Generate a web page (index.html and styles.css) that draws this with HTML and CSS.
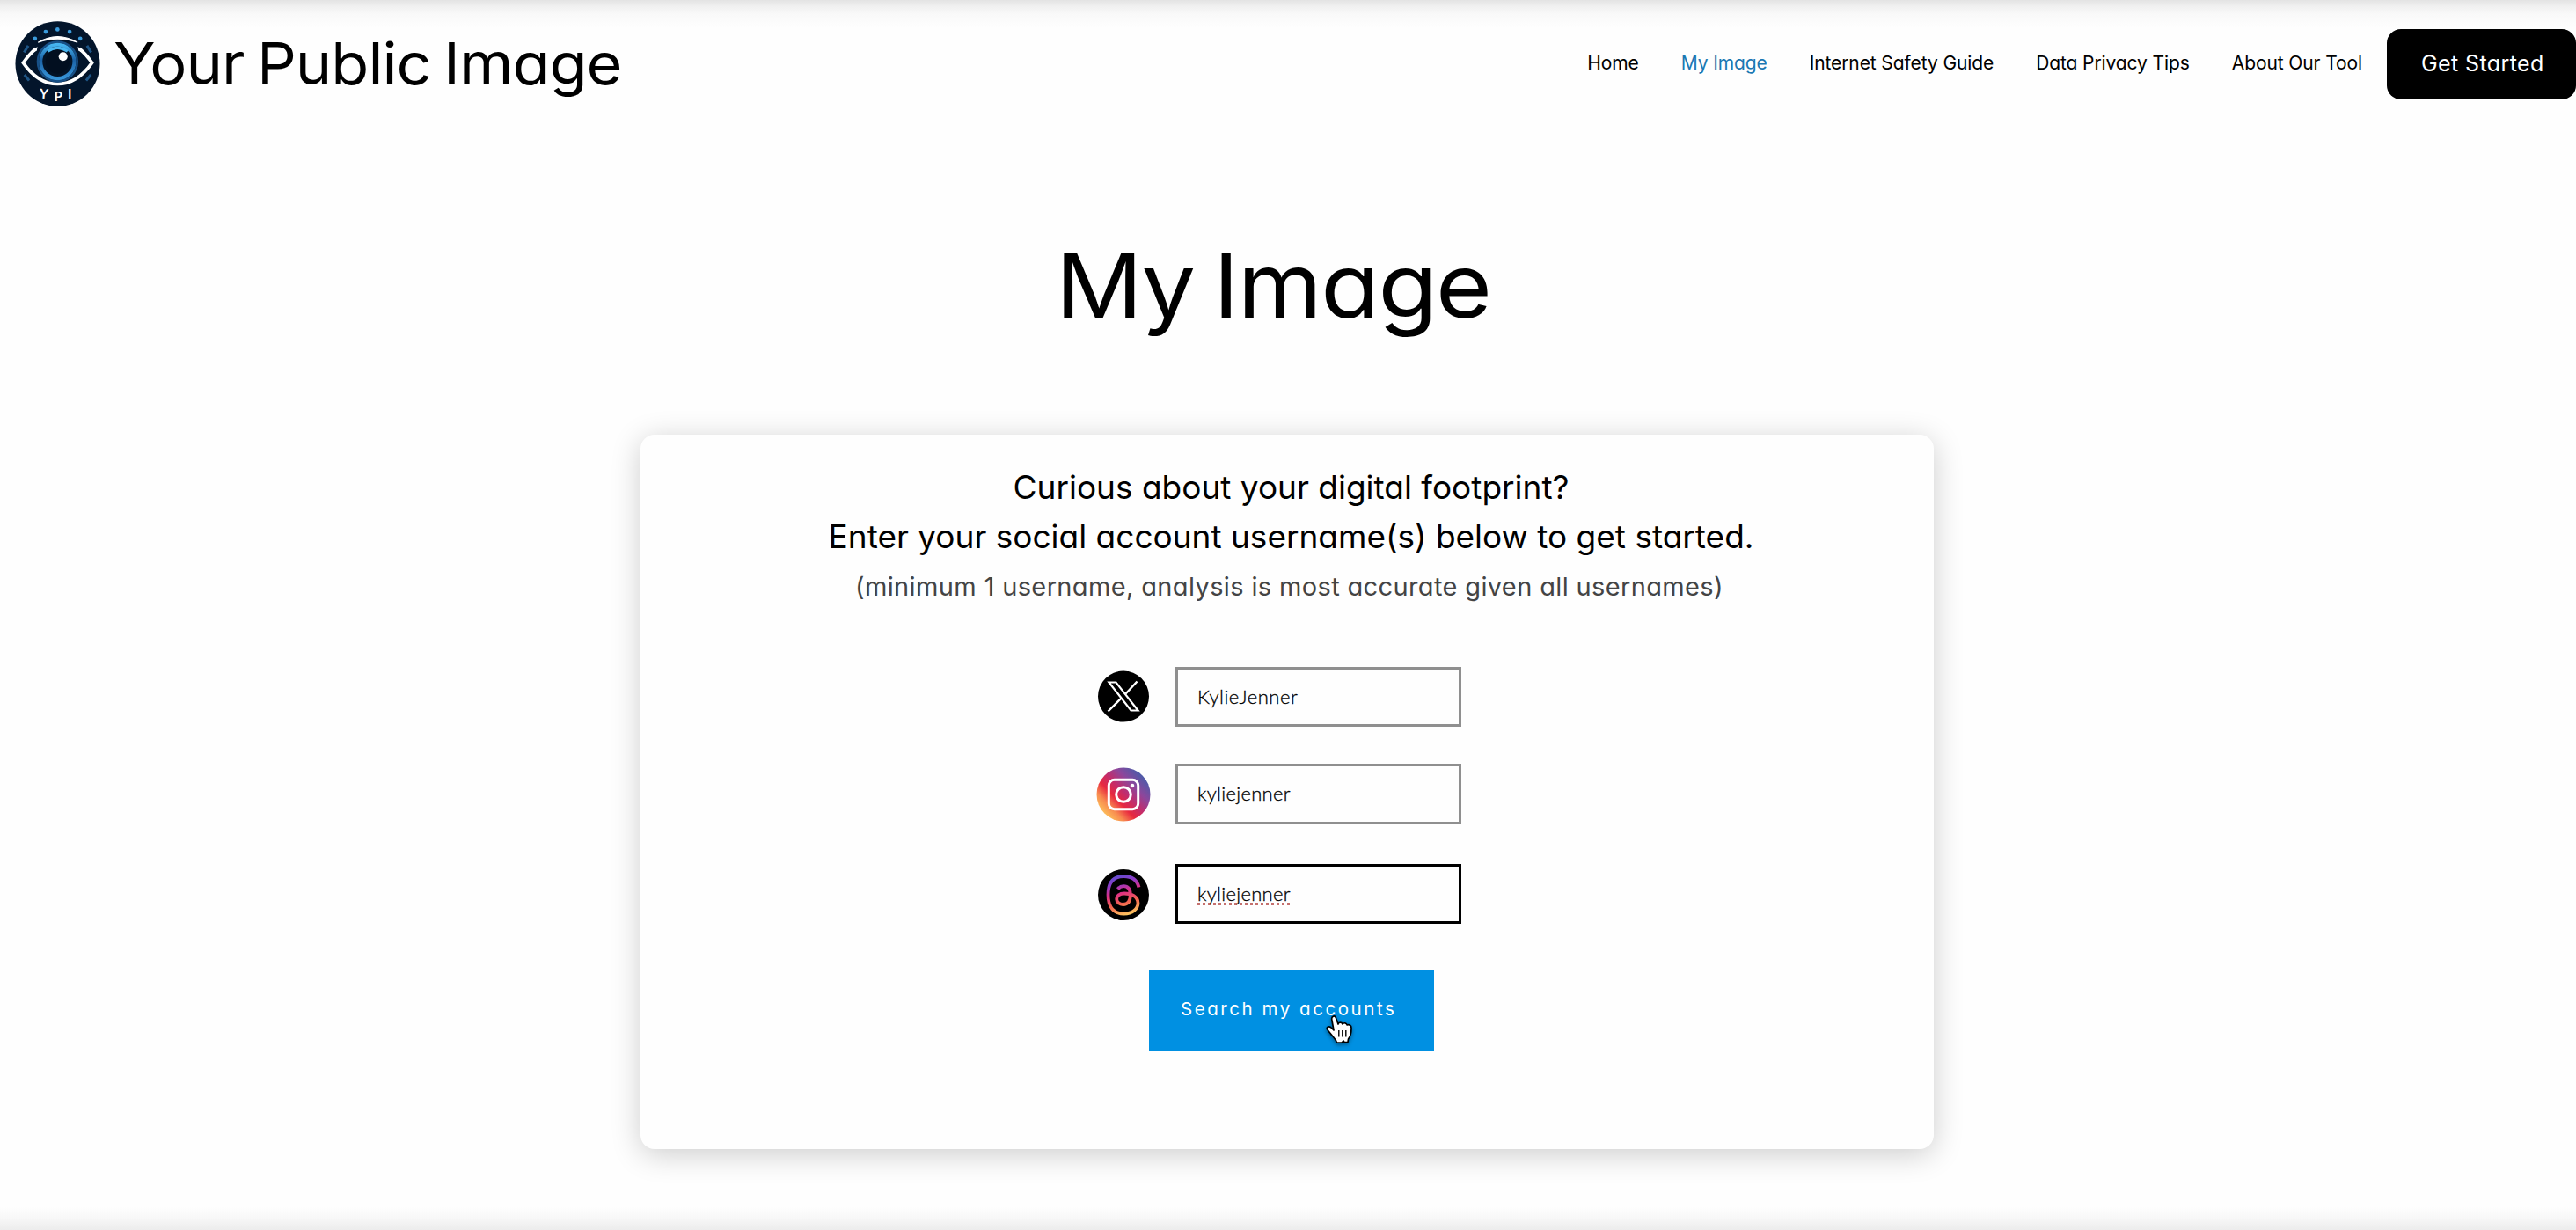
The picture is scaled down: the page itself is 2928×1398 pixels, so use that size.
FILE: index.html
```html
<!DOCTYPE html>
<html lang="en">
<head>
<meta charset="utf-8">
<title>My Image | Your Public Image</title>
<link rel="stylesheet" href="styles.css">
</head>
<body>
<header class="site-header">
  <a class="brand">
    <svg class="brand-logo" viewBox="53 43 287 289">
      <defs>
        <linearGradient id="iris" x1="0" y1="0" x2="0" y2="1"><stop offset="0" stop-color="#45b4f0"/><stop offset=".45" stop-color="#1b62a6"/><stop offset="1" stop-color="#3794d8"/></linearGradient>
      </defs>
      <ellipse cx="196.500" cy="187.500" rx="143" ry="144" fill="#03152b"/>
      <path d="M130 115 Q196 75 264 115 Q196 91 130 115Z" fill="#fff" stroke="#fff" stroke-width="3"/>
      <path d="M123 136 Q100 155 80 184 Q130 256 196 256 Q262 256 313 184 Q293 155 270 136" fill="none" stroke="#fff" stroke-width="11"/>
      <path d="M128 129 L104 154 L126 143Z M265 129 L289 154 L267 143Z" fill="#fff"/>
      <circle cx="196" cy="180" r="67" fill="none" stroke="#174f86" stroke-width="7"/>
      <circle cx="196" cy="180" r="57" fill="#031326" stroke="url(#iris)" stroke-width="12"/>
      <path d="M163 145 Q196 122 230 145" fill="none" stroke="#48b4ee" stroke-width="9"/>
      <circle cx="196" cy="180" r="40" fill="#020f20"/>
      <circle cx="215" cy="163" r="15" fill="#fff"/>
      <g fill="#3a9bdc"><circle cx="120" cy="102" r="7"/><circle cx="156" cy="79" r="7"/><circle cx="196" cy="71" r="7"/><circle cx="237" cy="79" r="7"/><circle cx="273" cy="102" r="7"/></g>
      <path d="M83 149 L97 126 M310 149 L296 126 M84 225 L100 244 M309 225 L293 244" stroke="#1f5687" stroke-width="9"/>
      <text x="135" y="305" class="logo-text" transform="rotate(5 150 290)">Y</text>
      <text x="185" y="315" class="logo-text">P</text>
      <text x="231" y="305" class="logo-text">I</text>
    </svg>
    <span class="brand-name">Your Public Image</span>
  </a>
  <nav class="nav">
    <a>Home</a>
    <a class="active">My Image</a>
    <a>Internet Safety Guide</a>
    <a>Data Privacy Tips</a>
    <a>About Our Tool</a>
  </nav>
  <a class="get-started">Get Started</a>
</header>
<main class="page">
  <h1 class="page-title">My Image</h1>
  <section class="card">
    <p class="lead">Curious about your digital footprint?</p>
    <p class="lead">Enter your social account username(s) below to get started.</p>
    <p class="hint">(minimum 1 username, analysis is most accurate given all usernames)</p>
    <form class="accounts">
      <div class="row">
        <svg class="icon" viewBox="0 0 62 62"><circle cx="31" cy="30.500" r="29" fill="#000"/><path d="M14.500 14.500 H22.500 L47.500 46.500 H39.500Z" fill="none" stroke="#fff" stroke-width="2.200"/><path d="M46.500 13.500 L33.500 27.500 M28.500 32.500 L13.500 47.500" stroke="#fff" stroke-width="2.400"/></svg>
        <div class="field">KylieJenner</div>
      </div>
      <div class="row">
        <svg class="icon" viewBox="0 0 62 62">
          <defs><linearGradient id="ig" x1=".12" y1=".85" x2=".85" y2=".15"><stop offset="0" stop-color="#fdc05a"/><stop offset=".18" stop-color="#f88a50"/><stop offset=".36" stop-color="#e8283f"/><stop offset=".55" stop-color="#c12d6d"/><stop offset=".75" stop-color="#8e469b"/><stop offset="1" stop-color="#4e5aa8"/></linearGradient></defs>
          <circle cx="31" cy="31" r="30.500" fill="url(#ig)"/><rect x="14.300" y="14.300" width="33.400" height="33.400" rx="6.500" fill="none" stroke="#fff" stroke-width="3"/><circle cx="31" cy="31" r="8.300" fill="none" stroke="#fff" stroke-width="3"/><circle cx="41" cy="21" r="2.300" fill="#fff"/></svg>
        <div class="field">kyliejenner</div>
      </div>
      <div class="row">
        <svg class="icon" viewBox="0 0 62 62">
          <defs><linearGradient id="th" gradientUnits="userSpaceOnUse" x1="22" y1="8" x2="36" y2="54"><stop offset="0" stop-color="#5b4fd0"/><stop offset=".22" stop-color="#8c3cc8"/><stop offset=".45" stop-color="#dd2f85"/><stop offset=".7" stop-color="#f4644f"/><stop offset="1" stop-color="#fdc860"/></linearGradient></defs>
          <circle cx="31" cy="32" r="29" fill="#000"/><path transform="translate(0 1)" d="M48.500 22.500 C46.500 14.500 40.500 10 31.500 10 C19.500 10 13.500 17.500 13.500 31 C13.500 45 20 52.500 31.500 52.500 C41 52.500 47.500 47 47.500 40.500 C47.500 33 40 29.500 32 29.500 C26 29.500 23.200 32.500 23.200 36 C23.200 39.500 26.500 42 30.500 42 C36 42 38.800 38.500 38.800 31 C38.800 24.500 36 21.200 31 21.200 C27.800 21.200 26 22.500 24.500 24.500" fill="none" stroke="url(#th)" stroke-width="3.800"/></svg>
        <div class="field focused"><span class="misspelled">kyliejenner</span></div>
      </div>
      <a class="search">Search my accounts
        <svg class="cursor" viewBox="0 0 32 34"><path d="M9 18 L6.800 6 C6 1.500 10.500 0.500 11.700 4.500 L14 11 C14.500 8.500 18 8.500 19 11 C20.500 9 23.500 9.500 24.200 12 C26.500 11 29.300 12.500 29 16 C29 22 28 25 25.500 28 L25 31.500 L21 31.500 L20 30 L18 32 L12.500 32 C11.500 28 8 25.500 5.500 22 L1.500 17 C0.500 14.500 3 12.800 5.500 14.500Z" fill="#fff" stroke="#000" stroke-width="1.700" stroke-linejoin="round"/><path d="M14.800 18 V25.500 M18.800 18 V25.500 M22.800 18 V25.500" stroke="#000" stroke-width="1.400"/></svg>
      </a>
    </form>
  </section>
</main>
</body>
</html>
```
FILE: styles.css
```css
* { box-sizing: border-box; }
body {
  margin: 0;
  height: 1398px;
  overflow: hidden;
  background:
    linear-gradient(#e3e3e3, #f0f0f0 22%, #f9f9f9 50%, #fefefe) 0 0 / 100% 32px no-repeat,
    linear-gradient(#fefefe, #f7f7f7 50%, #ececec) 0 100% / 100% 26px no-repeat,
    #fefefe;
  color: #000;
  font-family: Inter, "Liberation Sans", sans-serif;
  font-weight: 400;
  font-feature-settings: "cv11";
}
.site-header { display: flex; align-items: center; height: 144px; padding-left: 17px; }
.brand { display: flex; align-items: center; }
.brand-logo { width: 97px; height: 97px; display: block; }
.logo-text { font: 700 45px Lato, sans-serif; fill: #fff; }
.brand-name { margin-left: 15px; font-size: 66px; line-height: 78px; letter-spacing: -.95px; word-spacing: -4px; transform: scaleX(1.065); transform-origin: left; }
.nav { display: flex; gap: 48px; margin-left: auto; font-size: 21px; line-height: 28px; letter-spacing: -.1px; }
.active { color: #1b78b3; }
.get-started { flex: none; width: 215px; height: 80px; margin: 2px 0 0 28px; padding-left: 39px; border-radius: 16px; background: #000; color: #fff; font-size: 25px; line-height: 78px; letter-spacing: .4px; }
.page { display: flex; flex-direction: column; align-items: center; }
.page-title { margin: 120px 33px 110px 0; font-size: 102px; font-weight: inherit; line-height: 120px; letter-spacing: -1.6px; word-spacing: -7px; transform: scaleX(1.075); }
.card { display: flex; flex-direction: column; align-items: center; width: 1470px; height: 812px; margin-right: 2px; padding-top: 32px; border-radius: 16px; background: #fefefe; box-shadow: 0 6px 34px rgba(0,0,0,.2); }
.lead { margin: 0 0 0 9px; font-size: 37px; line-height: 56px; }
.hint { margin: 0 0 0 5px; font-size: 29px; line-height: 57px; color: #444; letter-spacing: .36px; }
.accounts { display: flex; flex-direction: column; width: 415px; margin: 63px 19px 0 0; }
.row { display: flex; align-items: center; justify-content: space-between; margin-bottom: 42px; }
.row + .row { margin-bottom: 45px; }
.row + .row + .row { margin-bottom: 52px; }
.icon { width: 62px; height: 62px; }
.field { width: 325px; height: 68px; padding-left: 22px; border: 3px solid #8f8f8f; font: 300 22px/61px Lato, sans-serif; letter-spacing: .55px; color: #000; -webkit-text-stroke: .3px #000; }
.row + .row .field { height: 69px; letter-spacing: .3px; }
.row + .row + .row .field { height: 68px; }
.row .focused { border-color: #000; }
.misspelled { background: repeating-linear-gradient(90deg, #c4706e 0 3px, transparent 3px 6px) 0 100% / 100% 3px no-repeat; }
.search { position: relative; align-self: center; width: 324px; height: 92px; margin-left: 29px; padding-left: 36px; background: #0090e2; color: #fff; font-size: 20.500px; line-height: 89px; letter-spacing: 2.550px; white-space: nowrap; }
.cursor { position: absolute; left: 201px; top: 51px; width: 32px; height: 34px; filter: drop-shadow(0 2px 2px rgba(0,0,0,.4)); }
```
